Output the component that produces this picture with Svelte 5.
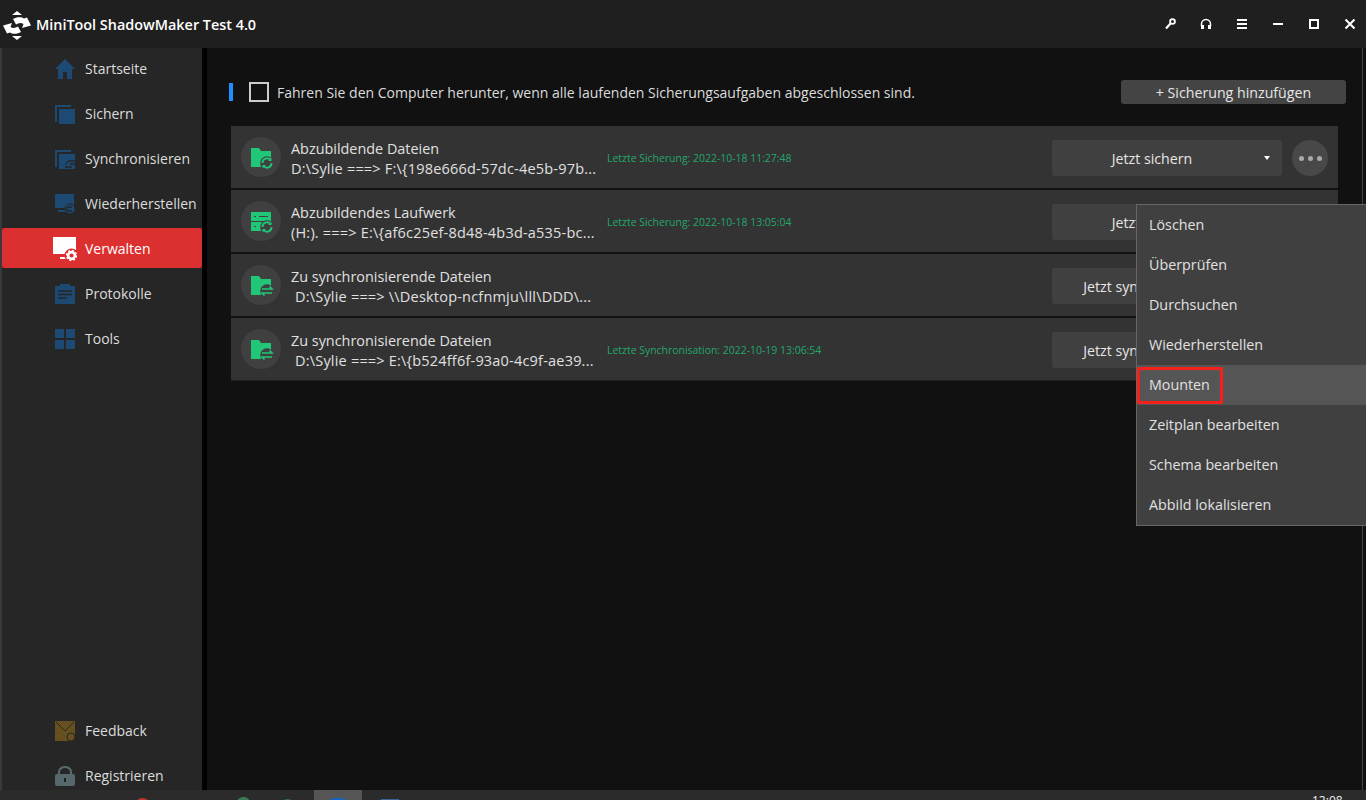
<script>
	const topNav = [
		{ label: 'Startseite', icon: 'home' },
		{ label: 'Sichern', icon: 'backup' },
		{ label: 'Synchronisieren', icon: 'sync' },
		{ label: 'Wiederherstellen', icon: 'restore' },
		{ label: 'Verwalten', icon: 'manage', active: true },
		{ label: 'Protokolle', icon: 'log' },
		{ label: 'Tools', icon: 'tools' }
	];

	const tasks = [
		{
			title: 'Abzubildende Dateien',
			path: 'D:\\Sylie ===> F:\\{198e666d-57dc-4e5b-97b...',
			last: 'Letzte Sicherung: 2022-10-18 11:27:48',
			action: 'Jetzt sichern',
			icon: 'folder-backup'
		},
		{
			title: 'Abzubildendes Laufwerk',
			path: '(H:). ===> E:\\{af6c25ef-8d48-4b3d-a535-bc...',
			last: 'Letzte Sicherung: 2022-10-18 13:05:04',
			action: 'Jetzt sichern',
			icon: 'disk-backup'
		},
		{
			title: 'Zu synchronisierende Dateien',
			path: 'D:\\Sylie ===> \\\\Desktop-ncfnmju\\lll\\DDD\\...',
			last: '',
			action: 'Jetzt synchronisieren',
			icon: 'folder-sync',
			indent: true
		},
		{
			title: 'Zu synchronisierende Dateien',
			path: 'D:\\Sylie ===> E:\\{b524ff6f-93a0-4c9f-ae39...',
			last: 'Letzte Synchronisation: 2022-10-19 13:06:54',
			action: 'Jetzt synchronisieren',
			icon: 'folder-sync',
			indent: true
		}
	];

	const menu = [
		'Löschen',
		'Überprüfen',
		'Durchsuchen',
		'Wiederherstellen',
		'Mounten',
		'Zeitplan bearbeiten',
		'Schema bearbeiten',
		'Abbild lokalisieren'
	];
</script>

{#snippet navIcon(name)}
	<svg class="nav-icon" viewBox="0 0 20 20" width="20" height="20">
		{#if name === 'home'}
			<path d="M10 0 L20 10 H17 V20 H12 V13 H8 V20 H3 V10 H0 Z" fill="#1d4a73" />
		{:else if name === 'backup'}
			<path d="M0 1 H16 V3 H2 V18 H0 Z" fill="#1d4a73" />
			<rect x="4" y="5" width="16" height="15" fill="#1d4a73" />
		{:else if name === 'sync'}
			<path d="M0 1 H16 V3 H2 V18 H0 Z" fill="#1d4a73" />
			<rect x="4" y="5" width="16" height="15" fill="#1d4a73" />
			<path d="M11 16 a4 4 0 0 1 4-4 h5 M20 15 h-5 M10 18 h7" stroke="#262626" stroke-width="1.5" fill="none" />
		{:else if name === 'restore'}
			<rect x="0" y="0" width="19" height="14" fill="#1d4a73" />
			<rect x="3" y="16" width="8" height="2" fill="#1d4a73" />
			<circle cx="15" cy="15" r="5" fill="#1d4a73" stroke="#262626" />
			<path d="M17 13 h-3 a2 2 0 0 0 0 4 h3" stroke="#262626" stroke-width="1.3" fill="none" />
		{:else if name === 'log'}
			<path d="M0 2 H5 V0 H15 V2 H20 V20 H0 Z" fill="#1d4a73" />
			<path d="M3 7 H17 M3 10.5 H17 M3 14 H12" stroke="#262626" stroke-width="1.4" />
		{:else if name === 'tools'}
			<rect x="0" y="0" width="9" height="9" fill="#1d4a73" />
			<rect x="11" y="0" width="9" height="9" fill="#1d4a73" />
			<rect x="0" y="11" width="9" height="9" fill="#1d4a73" />
			<rect x="11" y="11" width="9" height="9" fill="#1d4a73" />
		{:else if name === 'feedback'}
			<path d="M0 0 H20 V16 L18 20 H0 Z" fill="#67501f" />
			<path d="M1 1 L10 10 L19 1" stroke="#2b2620" stroke-width="1" fill="none" />
			<circle cx="16" cy="16" r="4" fill="#67501f" stroke="#262626" />
		{:else if name === 'lock'}
			<path d="M4 9 V6 a6 5 0 0 1 12 0 V9" stroke="#56686b" stroke-width="2.2" fill="none" />
			<rect x="0" y="8" width="20" height="12" rx="2" fill="#56686b" />
			<rect x="9" y="12" width="2" height="4" fill="#222" />
		{/if}
	</svg>
{/snippet}

{#snippet taskIcon(name)}
	<svg class="task-glyph" viewBox="0 0 23 22" width="23" height="22">
		{#if name === 'disk-backup'}
			<rect x="0" y="0" width="20" height="9" fill="#1fc777" />
			<rect x="0" y="10" width="20" height="9" fill="#1fc777" />
			<path d="M3 4.5 H5 M8 4.5 H17 M3 14.5 H5" stroke="#404040" stroke-width="1.2" />
		{:else}
			<path d="M0 0 H8 L10 3 H20 V19 H0 Z" fill="#1fc777" />
		{/if}
		<circle cx="16" cy="15" r="6.8" fill="#404040" />
		{#if name === 'folder-sync'}
			<path d="M11 13 H21 L18.5 10.5 M21 17 H11 L13.5 19.5" stroke="#1fc777" stroke-width="1.6" fill="none" />
		{:else}
			<path d="M11.5 15 a4.5 4.5 0 0 1 8-3 M20.5 15 a4.5 4.5 0 0 1 -8 3" stroke="#1fc777" stroke-width="1.8" fill="none" />
			<path d="M20.5 9.5 V13 H17 Z M11.5 20.5 V17 H15 Z" fill="#1fc777" />
		{/if}
	</svg>
{/snippet}

<div class="window">
	<header class="titlebar">
		<svg class="logo" viewBox="0 0 30 30" width="30" height="30">
			<path d="M15 1 L20 5 H10 Z M15 30 L10 26 H20 Z" fill="#fff" />
			<path d="M11 9 C15 6.5 20 7 22 8.5 L25 7.5 L29 15.5 L20 18 L21.5 14 C19 12.5 16.5 13 14 14.5 Z" fill="#fff" />
			<path d="M11 9 C15 6.5 20 7 22 8.5 L25 7.5 L29 15.5 L20 18 L21.5 14 C19 12.5 16.5 13 14 14.5 Z" fill="#fff" transform="rotate(180 15 15.5)" />
		</svg>
		<h1 class="app-title">MiniTool ShadowMaker Test 4.0</h1>
		<div class="window-controls">
			<svg viewBox="0 0 12 12" width="12" height="12">
				<circle cx="8.5" cy="3.5" r="2.4" fill="none" stroke="#fff" stroke-width="1.8" />
				<path d="M6.5 5.5 L2 10.5" stroke="#fff" stroke-width="2.2" />
			</svg>
			<svg viewBox="0 0 12 12" width="12" height="12">
				<path d="M1.5 8 V6 a4.5 4.5 0 0 1 9 0 V8" fill="none" stroke="#fff" stroke-width="1.5" />
				<rect x="1" y="7" width="3" height="4" fill="#fff" />
				<rect x="8" y="7" width="3" height="4" fill="#fff" />
			</svg>
			<svg viewBox="0 0 12 12" width="12" height="12">
				<path d="M1 2 H11 M1 6 H11 M1 10 H11" stroke="#fff" stroke-width="2" />
			</svg>
			<svg viewBox="0 0 12 12" width="12" height="12">
				<path d="M1 6 H11" stroke="#fff" stroke-width="2" />
			</svg>
			<svg viewBox="0 0 12 12" width="12" height="12">
				<rect x="2" y="2" width="8" height="8" fill="none" stroke="#fff" stroke-width="2" />
			</svg>
			<svg viewBox="0 0 12 12" width="12" height="12">
				<path d="M1.5 1.5 L10.5 10.5 M10.5 1.5 L1.5 10.5" stroke="#fff" stroke-width="2" />
			</svg>
		</div>
	</header>

	<div class="body">
		<aside class="sidebar">
			<nav class="nav">
				{#each topNav as item}
					<div class="nav-item" class:active={item.active}>
						{#if item.icon === 'manage'}
							<svg class="nav-icon manage" viewBox="0 0 24 24" width="24" height="24">
								<rect x="0" y="0" width="23" height="17" fill="#fff" />
								<rect x="7" y="20" width="8" height="2" fill="#fff" />
								<circle cx="18.5" cy="18.5" r="7" fill="#dc2f30" />
								<circle cx="18.5" cy="18.5" r="3.4" fill="none" stroke="#fff" stroke-width="2.6" />
								<circle cx="18.5" cy="18.5" r="5" fill="none" stroke="#fff" stroke-width="1.4" stroke-dasharray="2 1.9" />
							</svg>
						{:else}
							{@render navIcon(item.icon)}
						{/if}
						<span>{item.label}</span>
					</div>
				{/each}
			</nav>
			<nav class="nav nav-bottom">
				<div class="nav-item">
					{@render navIcon('feedback')}
					<span>Feedback</span>
				</div>
				<div class="nav-item">
					{@render navIcon('lock')}
					<span>Registrieren</span>
				</div>
			</nav>
		</aside>

		<main class="main">
			<div class="toolbar">
				<span class="marker"></span>
				<span class="checkbox"></span>
				<span class="shutdown">Fahren Sie den Computer herunter, wenn alle laufenden Sicherungsaufgaben abgeschlossen sind.</span>
				<button class="add-btn">+ Sicherung hinzufügen</button>
			</div>

			<div class="tasks">
				{#each tasks as task}
					<div class="task">
						<span class="task-icon">{@render taskIcon(task.icon)}</span>
						<div class="task-text">
							<div class="task-title">{task.title}</div>
							<div class="task-path" class:indent={task.indent}>{task.path}</div>
						</div>
						<div class="task-last">{task.last}</div>
						<button class="run-btn">
							<span>{task.action}</span>
							<i class="caret"></i>
						</button>
						<span class="more"><i></i><i></i><i></i></span>
					</div>
				{/each}
			</div>
		</main>
	</div>

	<ul class="menu">
		{#each menu as entry}
			<li class:hover={entry === 'Mounten'}>{entry}</li>
		{/each}
		<span class="callout"></span>
	</ul>

	<footer class="taskbar">
		<span class="tb-dot red"></span>
		<span class="tb-dot green"></span>
		<span class="tb-dot teal"></span>
		<span class="tb-tile"><i></i></span>
		<span class="tb-dot blue"></span>
		<span class="clock">12:08</span>
	</footer>
</div>

<style>
	:global(body) {
		background: #111;
	}

	.window {
		position: relative;
		width: 1366px;
		height: 800px;
		display: flex;
		flex-direction: column;
		overflow: hidden;
		background: #111;
		color: #e6e6e6;
		font-family: 'Open Sans', 'Noto Sans', sans-serif;
		font-size: 14px;
	}

	.titlebar {
		height: 48px;
		flex: none;
		display: flex;
		align-items: center;
		background: #1f1f1f;
		padding-left: 2px;
	}

	.logo {
		margin-top: 1px;
	}

	.app-title {
		margin: 0 0 0 4px;
		font-size: 14.4px;
		font-weight: 600;
		color: #fff;
	}

	.window-controls {
		margin-left: auto;
		margin-right: 10px;
		display: flex;
		gap: 24px;
	}

	.body {
		flex: 1;
		display: flex;
		min-height: 0;
	}

	.sidebar {
		width: 200px;
		margin-left: 2px;
		box-shadow: -2px 0 0 #3a3a3a;
		background: #262626;
		border-right: 5px solid #000;
		box-sizing: content-box;
		display: flex;
		flex-direction: column;
	}

	.nav {
		display: flex;
		flex-direction: column;
		gap: 5px;
	}

	.nav-bottom {
		margin-top: auto;
		margin-bottom: 5px;
	}

	.nav-item {
		height: 40px;
		box-sizing: border-box;
		padding: 1px 0 0 53px;
		display: flex;
		align-items: center;
		gap: 10px;
		border-radius: 2px;
		color: #dcdcdc;
	}

	.nav-item.active {
		background: #dc2f30;
		color: #fff;
	}

	.nav-icon {
		flex: none;
	}

	.nav-icon.manage {
		margin-left: -2px;
		margin-right: -2px;
	}

	.main {
		flex: 1;
		min-width: 0;
		padding: 32px 20px 0 24px;
		border-right: 1px solid #444;
		margin-right: 3px;
	}

	.toolbar {
		height: 24px;
		display: flex;
		align-items: center;
		margin-right: -4px;
	}

	.marker {
		width: 4px;
		height: 18px;
		background: #1f8fff;
		margin-left: -2px;
		margin-right: 16px;
	}

	.checkbox {
		width: 16px;
		height: 16px;
		border: 2px solid #ccc;
		margin-right: 8px;
	}

	.shutdown {
		padding-top: 1px;
		color: #dcdcdc;
		white-space: nowrap;
	}

	.add-btn {
		margin-left: auto;
		width: 225px;
		height: 24px;
		padding: 1px 0 0;
		border: 0;
		border-radius: 3px;
		background: #444;
		color: #e6e6e6;
		font: inherit;
		font-size: 14.2px;
	}

	.tasks {
		margin-top: 22px;
		display: flex;
		flex-direction: column;
		gap: 2px;
		border-bottom: 1px solid #222;
		margin-right: 4px;
	}

	.task {
		height: 62px;
		display: flex;
		align-items: center;
		background: #333;
		padding-left: 10px;
	}

	.task-icon {
		flex: none;
		width: 40px;
		height: 40px;
		border-radius: 50%;
		background: #404040;
		display: flex;
		align-items: center;
		justify-content: center;
	}

	.task-glyph {
		margin: 4px 0 0 3px;
	}

	.task-text {
		width: 316px;
		margin: 4px 0 0 10px;
		line-height: 20px;
		color: #e0e0e0;
		white-space: nowrap;
	}

	.task-title {
		font-size: 14.4px;
	}

	.task-path {
		font-size: 14.5px;
		letter-spacing: 0.2px;
	}

	.indent {
		padding-left: 4px;
	}

	.task-last {
		flex: 1;
		padding-top: 2px;
		font-size: 10.45px;
		color: #22a86a;
	}

	.run-btn {
		position: relative;
		width: 230px;
		height: 36px;
		margin-top: 2px;
		padding: 0 30px 0 0;
		border: 0;
		border-radius: 3px;
		background: #404040;
		color: #e6e6e6;
		font: inherit;
		font-size: 14.2px;
	}

	.caret {
		position: absolute;
		right: 12px;
		top: 16px;
		border: 3px solid transparent;
		border-top: 4px solid #fff;
		border-bottom: 0;
	}

	.more {
		flex: none;
		width: 36px;
		height: 36px;
		margin: 2px 10px 0;
		border-radius: 50%;
		background: #484848;
		display: flex;
		align-items: center;
		justify-content: center;
		gap: 4px;
	}

	.more i {
		width: 5px;
		height: 5px;
		border-radius: 50%;
		background: #aaa;
	}

	.menu {
		position: absolute;
		left: 1136px;
		top: 204px;
		width: 230px;
		box-sizing: border-box;
		margin: 0;
		padding: 0;
		list-style: none;
		background: #404040;
		border: 1px solid #666;
		border-right: 0;
		font-size: 14.3px;
	}

	.menu li {
		height: 40px;
		line-height: 40px;
		padding-left: 12px;
		color: #e0e0e0;
	}

	.menu li.hover {
		background: #555;
	}

	.callout {
		position: absolute;
		left: 0;
		top: 162px;
		width: 86px;
		height: 37px;
		box-sizing: border-box;
		border: 3px solid #f5201a;
		border-radius: 2px;
	}

	.taskbar {
		position: absolute;
		left: 0;
		right: 0;
		bottom: 0;
		height: 10px;
		background: #2b2b2b;
		overflow: hidden;
	}

	.tb-tile {
		position: absolute;
		left: 314px;
		top: 0;
		width: 48px;
		height: 10px;
		background: #555;
	}

	.tb-tile i {
		position: absolute;
		left: 13px;
		top: 8px;
		width: 22px;
		height: 8px;
		border-radius: 8px 8px 0 0;
		background: #1565c0;
	}

	.tb-dot {
		position: absolute;
		top: 8px;
		width: 11px;
		height: 6px;
		border-radius: 50%;
	}

	.red { left: 137px; background: #b33; }
	.green { left: 238px; top: 7px; background: #3a7a55; }
	.teal { left: 282px; top: 9px; background: #2f6b66; }
	.blue { left: 381px; top: 9px; width: 18px; border-radius: 0; background: #35679c; }

	.clock {
		position: absolute;
		left: 1312px;
		top: 5px;
		font-size: 12px;
		line-height: 12px;
		color: #eee;
	}
</style>
